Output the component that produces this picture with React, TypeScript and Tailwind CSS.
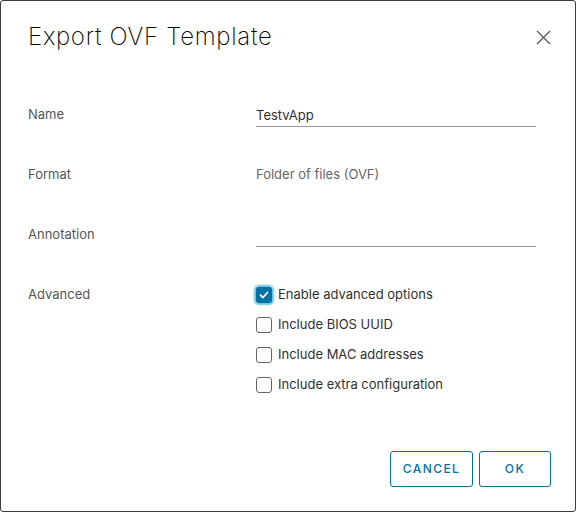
import React, { useState } from 'react';

const font = { fontFamily: 'Inter, "Noto Sans", sans-serif' };

function Checkbox({ checked, label, focused, onChange }: { checked: boolean; label: string; focused?: boolean; onChange: () => void }) {
  return (
    <label className="flex h-6 cursor-pointer items-center gap-[6px]">
      <span
        className={
          checked
            ? `flex h-4 w-4 items-center justify-center rounded-[3px] bg-[#0072a3] ${focused ? 'shadow-[0_0_2px_2px_#6bc1e3]' : ''}`
            : 'h-4 w-4 rounded-[3px] border border-[#666666] bg-white'
        }
        onClick={onChange}
      >
        {checked && (
          <svg width="10" height="8" viewBox="0 0 10 8">
            <path d="M1.5 4.2 L4 6.5 L8.5 1.5" fill="none" stroke="white" strokeWidth="1.8" strokeLinecap="round" strokeLinejoin="round" />
          </svg>
        )}
      </span>
      <span className="text-[13px] text-[#313131]">{label}</span>
    </label>
  );
}

export default function App() {
  const [name, setName] = useState('TestvApp');
  const [opts, setOpts] = useState([true, false, false, false]);
  const labels = ['Enable advanced options', 'Include BIOS UUID', 'Include MAC addresses', 'Include extra configuration'];

  const toggle = (i: number) => setOpts(prev => prev.map((v, j) => (j === i ? !v : v)));

  return (
    <div style={font} className="flex h-[512px] w-[576px] flex-col rounded-[3px] border border-[#3d3d3d] bg-white">
      {/* Header */}
      <div className="flex items-center justify-between pl-[27px] pr-[20px] pt-[21px]">
        <h1 className="text-[24px] font-extralight leading-[30px] tracking-[0.03em] text-[#000000]">Export OVF Template</h1>
        <button className="flex h-6 w-6 items-center justify-center text-[#565656]">
          <svg width="15" height="15" viewBox="0 0 15 15">
            <path d="M1 1 L14 14 M14 1 L1 14" stroke="currentColor" strokeWidth="1.3" fill="none" />
          </svg>
        </button>
      </div>

      {/* Body */}
      <div className="flex flex-col gap-9 pl-[27px] pt-[51px] text-[13px] text-[#565656]">
        <div className="flex h-6 items-center">
          <div className="w-[228px]">Name</div>
          <input
            value={name}
            onChange={e => setName(e.target.value)}
            className="h-6 w-[280px] border-b border-[#9a9a9a] text-[13px] text-[#313131] outline-none"
          />
        </div>
        <div className="flex h-6 items-center">
          <div className="w-[228px]">Format</div>
          <div className="text-[#666666]">Folder of files (OVF)</div>
        </div>
        <div className="flex h-6 items-center">
          <div className="w-[228px]">Annotation</div>
          <input className="h-6 w-[280px] border-b border-[#9a9a9a] text-[13px] text-[#313131] outline-none" />
        </div>
        <div className="flex">
          <div className="flex h-6 w-[228px] items-center">Advanced</div>
          <div className="flex flex-col gap-[6px]">
            {labels.map((l, i) => (
              <Checkbox key={l} label={l} checked={opts[i]} focused={i === 0} onChange={() => toggle(i)} />
            ))}
          </div>
        </div>
      </div>

      {/* Footer */}
      <div className="mt-auto flex justify-end gap-[6px] pb-[24px] pr-[24px]">
        <button className="h-9 w-[83px] rounded-[3px] border border-[#0072a3] text-[12px] font-medium tracking-[0.12em] text-[#0072a3]">
          CANCEL
        </button>
        <button className="h-9 w-[72px] rounded-[3px] border border-[#0072a3] text-[12px] font-medium tracking-[0.12em] text-[#0072a3]">
          OK
        </button>
      </div>
    </div>
  );
}
